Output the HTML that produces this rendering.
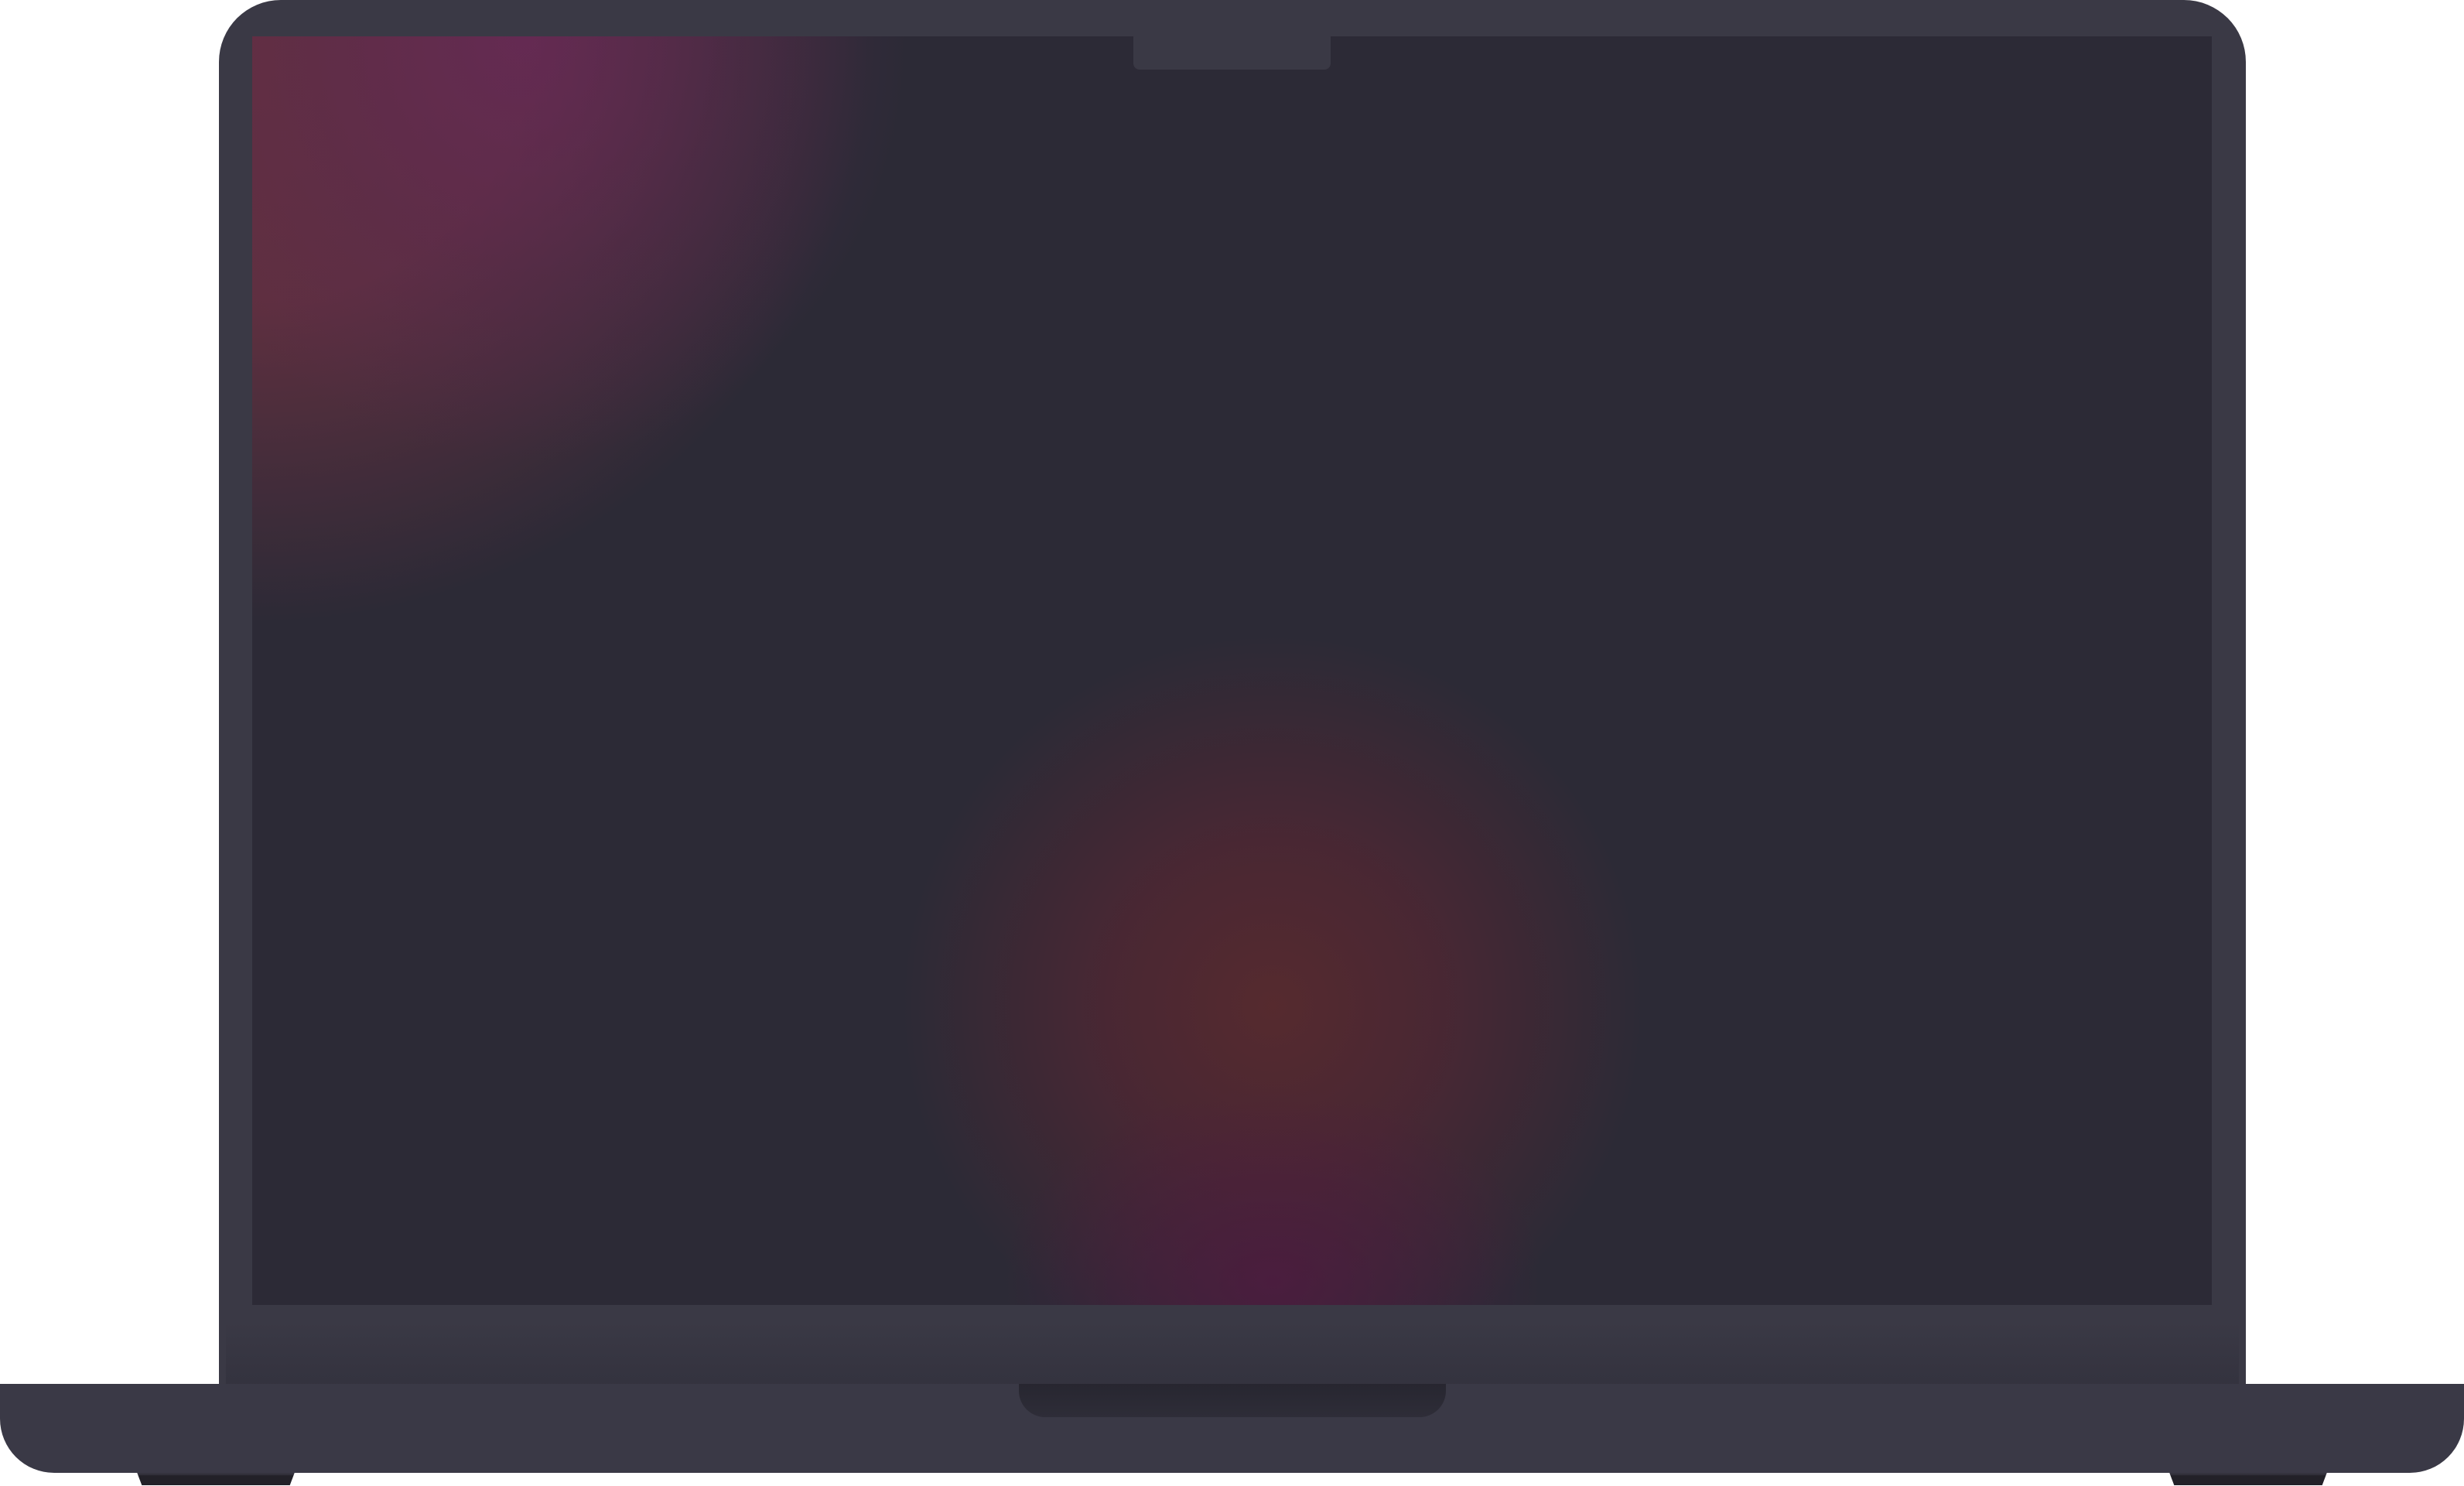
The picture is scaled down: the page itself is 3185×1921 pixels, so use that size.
<!DOCTYPE html>
<html><head><meta charset="utf-8"><style>
html,body{margin:0;padding:0;background:#fff;width:3185px;height:1921px;overflow:hidden;position:relative}
div{position:absolute;box-sizing:border-box}
.lid{left:283px;top:0;width:2620px;height:1800px;background:#3a3945;border-radius:80px 80px 0 0}
.lidin{left:292px;top:9px;width:2602px;height:1791px;border-radius:72px 72px 0 0;background:linear-gradient(#3a3945 0,#3a3945 1700px,#33323e 1788px)}
.screen{left:326px;top:47px;width:2533px;height:1640px;background:#2c2a36;overflow:hidden}
.g1{left:-800px;top:-760px;width:1600px;height:1520px;background:radial-gradient(closest-side,rgba(100,48,62,1) 0,rgba(98,48,64,.95) 45%,rgba(44,42,54,0) 100%)}
.g1b{left:-150px;top:-550px;width:1000px;height:1100px;background:radial-gradient(closest-side,rgba(102,40,90,.7) 0,rgba(90,40,85,.35) 55%,rgba(44,42,54,0) 100%)}
.g2{left:839px;top:773px;width:960px;height:960px;background:radial-gradient(closest-side,rgba(88,42,46,.95) 0,rgba(85,38,50,.7) 45%,rgba(44,42,54,0) 100%)}
.g2b{left:969px;top:1360px;width:700px;height:500px;background:radial-gradient(closest-side,rgba(80,25,65,.75) 0,rgba(44,42,54,0) 100%)}
.notch{left:1465px;top:47px;width:255px;height:43px;background:#3a3945;border-radius:0 0 8px 8px}
.base{left:0;top:1789px;width:3185px;height:115px;background:#3a3946;border-radius:0 0 70px 70px}
.tp{left:1317px;top:1789px;width:552px;height:43px;background:linear-gradient(#272630,#2e2d38);border-radius:0 0 34px 34px}
.foot{top:1898px;width:208px;height:22px;background:linear-gradient(#35343f 0,#35343f 35%,#222128 45%);clip-path:polygon(0 0,100% 0,96% 100%,4% 100%)}
</style></head><body>
<div class="lid"></div>
<div class="lidin"></div>
<div class="screen">
<div class="g1"></div><div class="g1b"></div><div class="g2"></div><div class="g2b"></div>
</div>
<div class="notch"></div>
<div class="foot" style="left:175px"></div>
<div class="foot" style="left:2802px"></div>
<div class="base"></div>
<div class="tp"></div>
</body></html>
